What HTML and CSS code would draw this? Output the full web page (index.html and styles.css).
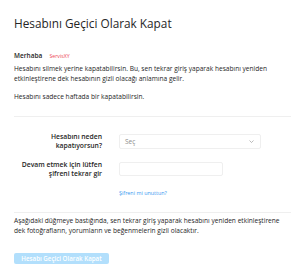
FILE: index.html
```html
<!DOCTYPE html>
<html lang="tr">
<head>
    <meta charset="UTF-8">
    <meta name="viewport" content="width=device-width, initial-scale=1.0">
    <title>Hesabını Geçici Olarak Kapat</title>
    <link rel="stylesheet" href="styles.css">
</head>
<body>

<div class="page">
    <!-- Başlık -->
    <h2 class="title">Hesabını Geçici Olarak Kapat</h2>

    <div class="greeting">
        <span class="hello">Merhaba</span>
        <span class="username">ServisXY</span>
    </div>

    <p class="text">Hesabını silmek yerine kapatabilirsin. Bu, sen tekrar giriş yaparak hesabını yeniden etkinleştirene dek hesabının gizli olacağı anlamına gelir.</p>
    <p class="text spaced">Hesabını sadece haftada bir kapatabilirsin.</p>

    <div class="divider"></div>

    <!-- Form -->
    <div class="form-row first">
        <label class="form-label">Hesabını neden kapatıyorsun?</label>
        <div class="select-box">
            <span class="select-text">Seç</span>
            <svg class="chevron" width="5" height="3" viewBox="0 0 10 6">
                <path d="M1 1 L5 5 L9 1" fill="none" stroke="#8e8e8e" stroke-width="1.2"/>
            </svg>
        </div>
    </div>

    <div class="form-row">
        <label class="form-label">Devam etmek için lütfen şifreni tekrar gir</label>
        <input class="password-input" type="password">
    </div>

    <div class="forgot-row">
        <a class="forgot-link" href="#">Şifreni mi unuttun?</a>
    </div>

    <div class="divider second"></div>

    <p class="text">Aşağıdaki düğmeye bastığında, sen tekrar giriş yaparak hesabını yeniden etkinleştirene dek fotoğrafların, yorumların ve beğenmelerin gizli olacaktır.</p>

    <button class="disable-button" disabled>Hesabı Geçici Olarak Kapat</button>
</div>

</body>
</html>
```

FILE: styles.css
```css
/* Genel */
body {
    margin: 0;
    padding: 0;
    background-color: #ffffff;
    font-family: 'Open Sans', sans-serif;
    color: #262626;
}

.page {
    padding: 0 9px 0 14px;
}

/* Başlık */
.title {
    margin: 16px 0 0 0;
    font-size: 11.8px;
    line-height: 14px;
    font-weight: 400;
}

.greeting {
    margin-top: 17px;
    line-height: 10px;
}

.hello {
    font-size: 6.5px;
    font-weight: 600;
}

.username {
    margin-left: 3px;
    font-size: 5.2px;
    color: #ed4956;
}

/* Metinler */
.text {
    margin: 3px 0 0 0;
    padding-right: 8px;
    font-size: 6.6px;
    line-height: 10px;
}

.text.spaced {
    margin-top: 8px;
}

.divider {
    height: 1px;
    background-color: #efefef;
    margin-top: 14px;
}

.divider.second {
    margin-top: 15px;
}

/* Form */
.form-row {
    display: flex;
    align-items: center;
    gap: 17px;
    margin-top: 10px;
}

.form-row.first {
    margin-top: 15px;
}

.form-label {
    width: 88px;
    flex-shrink: 0;
    text-align: right;
    font-size: 6.8px;
    line-height: 9px;
    font-weight: 600;
}

.select-box {
    width: 142px;
    height: 15px;
    box-sizing: border-box;
    border: 1px solid #efefef;
    border-radius: 2px;
    background-color: #ffffff;
    display: flex;
    align-items: center;
    justify-content: space-between;
    padding: 0 6px 0 5px;
}

.select-text {
    font-size: 6.5px;
    color: #8e8e8e;
}

.password-input {
    width: 104px;
    height: 14px;
    box-sizing: border-box;
    border: 1px solid #efefef;
    border-radius: 2px;
    background-color: #ffffff;
    padding: 0;
    margin: 0;
}

.forgot-row {
    padding-left: 105px;
    margin-top: 7px;
    line-height: 8px;
}

.forgot-link {
    font-size: 5.4px;
    color: #3897f0;
    text-decoration: none;
}

/* Buton */
.disable-button {
    margin-top: 17px;
    width: 95px;
    height: 11px;
    padding: 0;
    border: none;
    border-radius: 2px;
    background-color: #b2dffc;
    color: #ffffff;
    font-family: 'Open Sans', sans-serif;
    font-size: 6.2px;
    font-weight: 600;
}
```
